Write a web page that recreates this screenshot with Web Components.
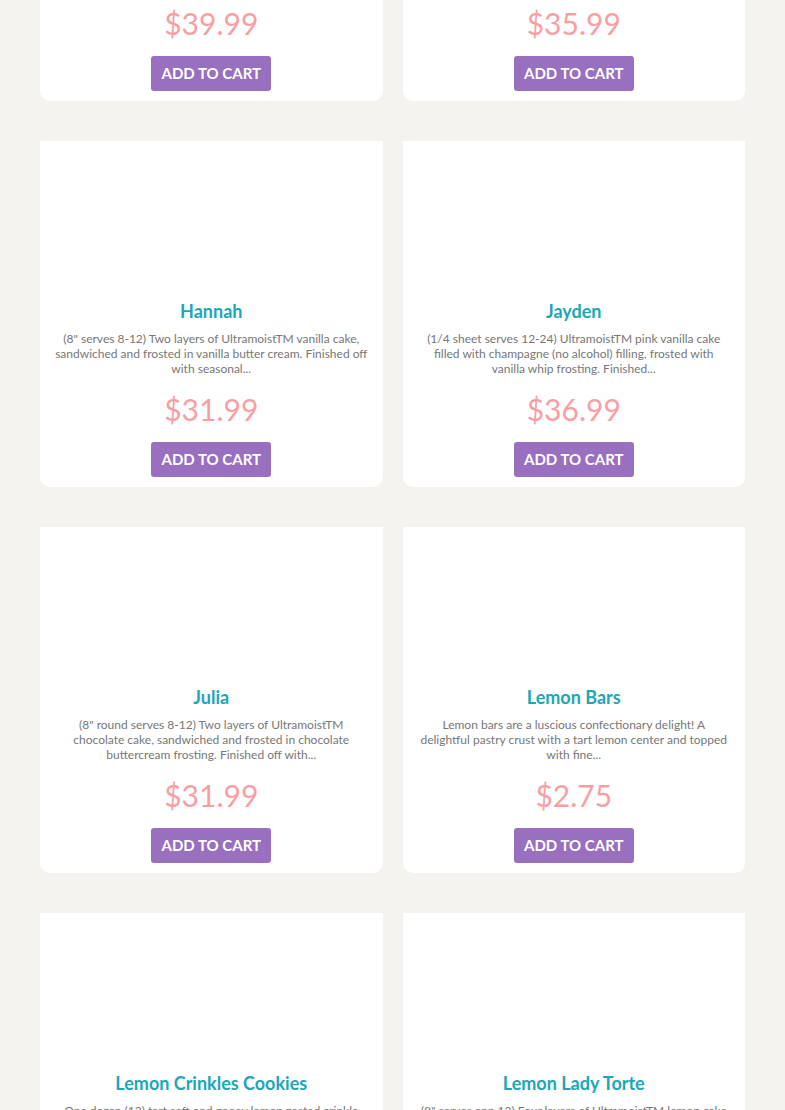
<!DOCTYPE html>
<html lang="en">
<head>
<meta charset="utf-8">
<meta name="viewport" content="width=device-width, initial-scale=1">
<title>Cakes and treats</title>
<style>
html, body { margin: 0; }
body { height: 100vh; overflow: hidden; background: #f4f3ef; font-family: Lato, "Open Sans", sans-serif; }
</style>
</head>
<body>
<product-grid>
  <product-card partial price="$39.99"></product-card>
  <product-card partial price="$35.99"></product-card>
  <product-card price="$31.99"><span slot="name">Hannah</span>(8" serves 8-12) Two layers of UltramoistTM vanilla cake, sandwiched and frosted in vanilla butter cream. Finished off with seasonal...</product-card>
  <product-card price="$36.99"><span slot="name">Jayden</span>(1/4 sheet serves 12-24) UltramoistTM pink vanilla cake filled with champagne (no alcohol) filling, frosted with vanilla whip frosting. Finished...</product-card>
  <product-card price="$31.99"><span slot="name">Julia</span>(8" round serves 8-12) Two layers of UltramoistTM chocolate cake, sandwiched and frosted in chocolate buttercream frosting. Finished off with...</product-card>
  <product-card price="$2.75"><span slot="name">Lemon Bars</span>Lemon bars are a luscious confectionary delight! A delightful pastry crust with a tart lemon center and topped with fine...</product-card>
  <product-card preview><span slot="name">Lemon Crinkles Cookies</span>One dozen (12) tart soft and gooey lemon zested crinkle</product-card>
  <product-card preview><span slot="name">Lemon Lady Torte</span>(8" serves app 12) Four layers of UltramoistTM lemon cake</product-card>
</product-grid>

<script>
class ProductGrid extends HTMLElement {
  constructor() {
    super();
    this.attachShadow({ mode: "open" }).innerHTML = `
      <style>
        :host { display: block; padding: 0 40px; }
        main { display: grid; grid-template-columns: repeat(2, minmax(0, 1fr)); gap: 40px 20px; }
      </style>
      <main><slot></slot></main>`;
  }
}

class CartButton extends HTMLElement {
  constructor() {
    super();
    this.attachShadow({ mode: "open" }).innerHTML = `
      <style>
        :host { display: block; }
        button {
          display: block; margin: 0 auto; padding: 8px 10px; border: 0; border-radius: 3px;
          background: #996fc0; color: #fff; font: 700 15px/19px Lato, sans-serif;
          text-transform: uppercase; cursor: pointer;
        }
      </style>
      <button type="button"><slot></slot></button>`;
  }
}

class ProductCard extends HTMLElement {
  connectedCallback() {
    if (this.shadowRoot) return;
    const partial = this.hasAttribute("partial");
    const preview = this.hasAttribute("preview");
    this.attachShadow({ mode: "open" }).innerHTML = `
      <style>
        :host { display: block; box-sizing: border-box; padding-bottom: 10px; background: #fff; border-radius: 0 0 10px 10px; text-align: center; }
        :host([partial]) { padding-top: 5px; }
        .photo { height: 159px; }
        h2 { margin: 0 15px 9px; color: #1ca6b8; font-size: 18px; line-height: 22px; font-weight: 700; }
        .description { margin: 0 15px 15px; color: #777; font-size: 12px; line-height: 15px; }
        .price { margin: 0 0 15px; color: #f99fa4; font-size: 30px; line-height: 36px; font-weight: 400; }
      </style>
      <article>
        ${partial ? "" : `<div class="photo"></div>
        <h2><slot name="name"></slot></h2>
        <p class="description"><slot></slot></p>`}
        ${preview ? "" : `<p class="price">${this.getAttribute("price")}</p>
        <cart-button>Add to cart</cart-button>`}
      </article>`;
  }
}

customElements.define("product-grid", ProductGrid);
customElements.define("cart-button", CartButton);
customElements.define("product-card", ProductCard);
</script>
</body>
</html>
